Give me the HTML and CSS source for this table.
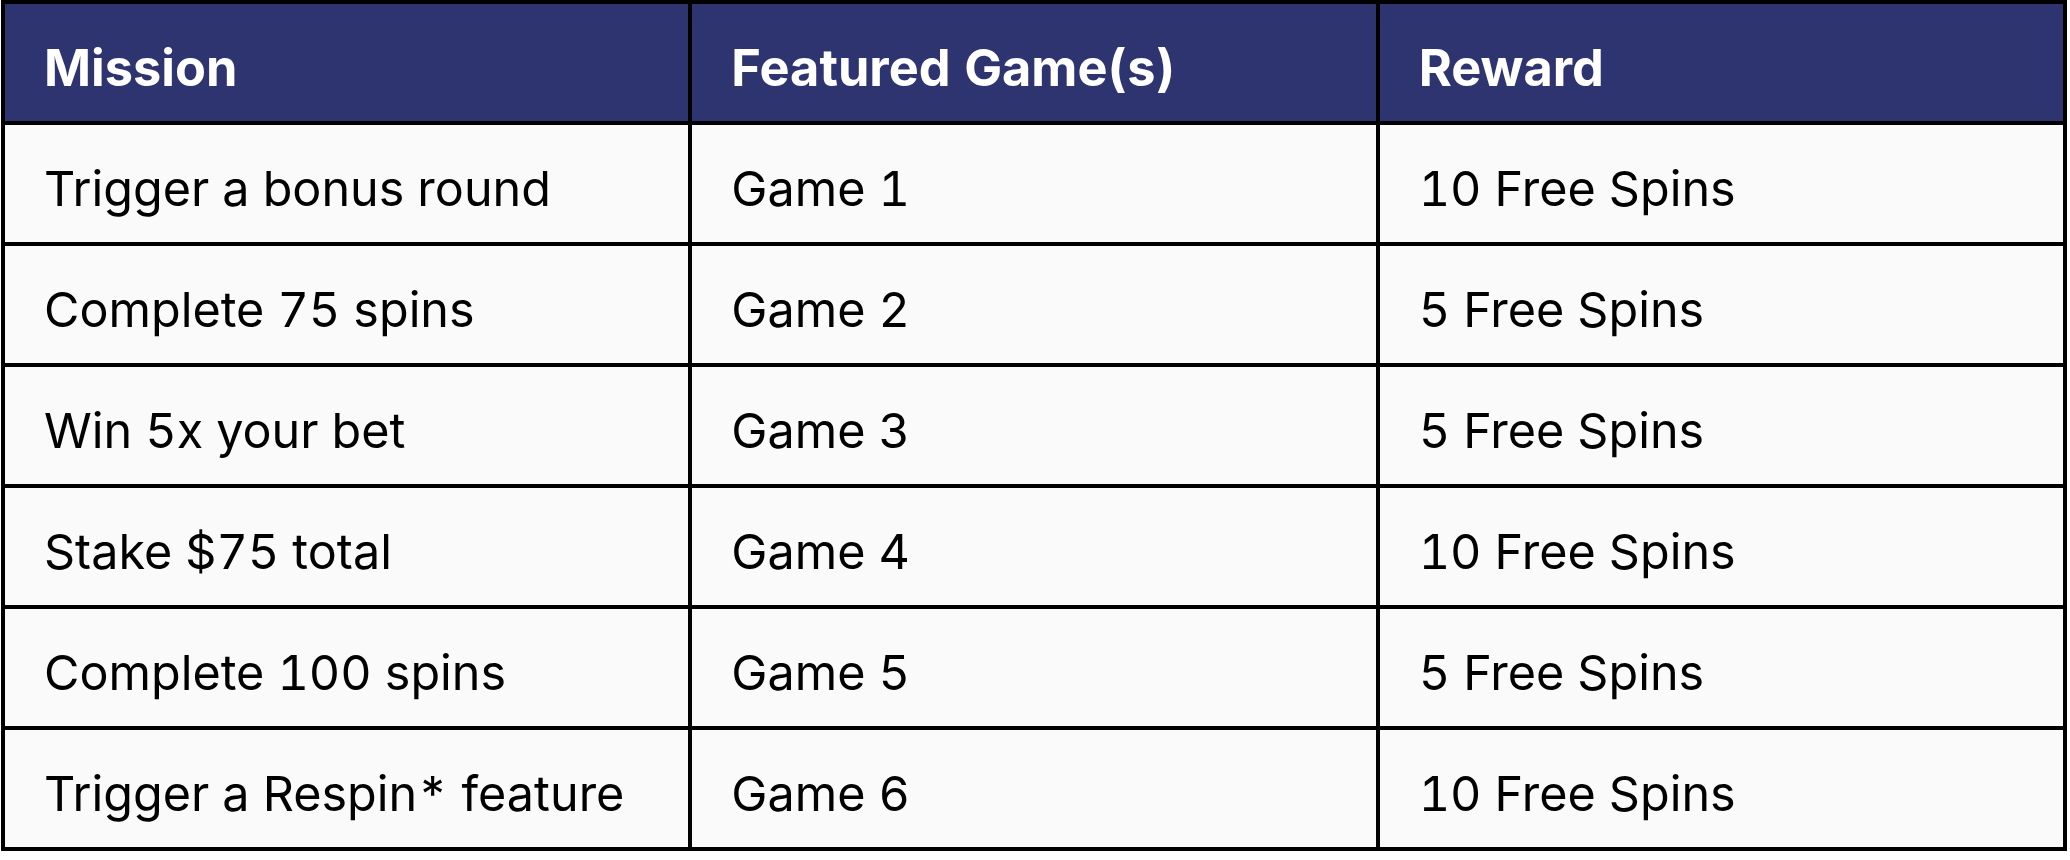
FILE: index.html
```html
<!DOCTYPE html>
<html lang="en">
<head>
<meta charset="utf-8">
<title>Missions</title>
<link rel="stylesheet" href="styles.css">
</head>
<body>
<table class="missions">
  <thead>
    <tr class="head-row">
      <th class="cell head">Mission</th>
      <th class="cell head">Featured Game(s)</th>
      <th class="cell head">Reward</th>
    </tr>
  </thead>
  <tbody>
    <tr><td class="cell">Trigger a bonus round</td><td class="cell">Game 1</td><td class="cell">10 Free Spins</td></tr>
    <tr><td class="cell">Complete 75 spins</td><td class="cell">Game 2</td><td class="cell">5 Free Spins</td></tr>
    <tr><td class="cell">Win 5x your bet</td><td class="cell">Game 3</td><td class="cell">5 Free Spins</td></tr>
    <tr><td class="cell">Stake $75 total</td><td class="cell">Game 4</td><td class="cell">10 Free Spins</td></tr>
    <tr><td class="cell">Complete 100 spins</td><td class="cell">Game 5</td><td class="cell">5 Free Spins</td></tr>
    <tr><td class="cell">Trigger a Respin* feature</td><td class="cell">Game 6</td><td class="cell">10 Free Spins</td></tr>
  </tbody>
</table>
</body>
</html>
```
FILE: styles.css
```css
html, body {
  margin: 0;
  padding: 0;
  background: #ffffff;
}
body {
  padding: 0 0 0 1px;
  font-family: Inter, "Noto Sans", "Liberation Sans", sans-serif;
}
.missions {
  width: 2066px;
  border-collapse: separate;
  border-spacing: 4px;
  background: #000000;
  table-layout: fixed;
}
.cell {
  height: 117px;
  box-sizing: border-box;
  padding: 10px 0 0 39px;
  text-align: left;
  vertical-align: middle;
  font-size: 48.5px;
  font-weight: 400;
  font-variant-numeric: tabular-nums;
  color: #000000;
  background: #fafafa;
  white-space: nowrap;
}
.head {
  background: #2e3470;
  color: #ffffff;
  font-weight: 700;
  font-size: 50.5px;
}
```
